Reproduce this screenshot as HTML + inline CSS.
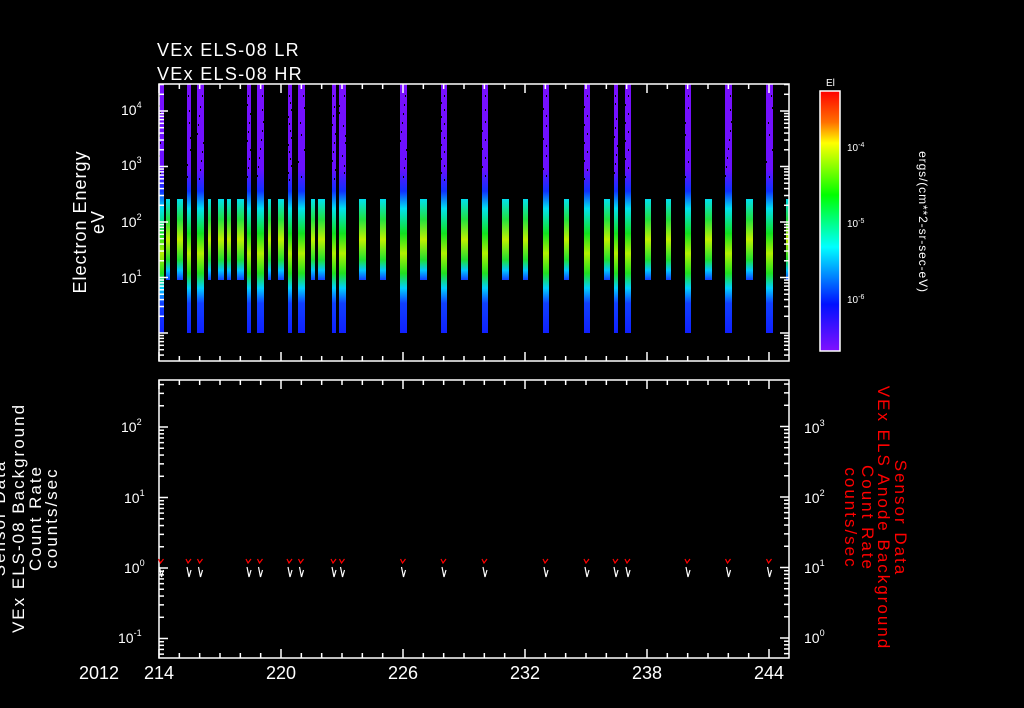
<!DOCTYPE html>
<html><head><meta charset="utf-8"><style>
html,body{margin:0;padding:0;background:#000;width:1024px;height:708px;overflow:hidden}
svg{display:block}
text{font-family:"Liberation Sans",sans-serif;fill:#fff}
</style></head><body>
<svg id="s" width="1024" height="708" viewBox="0 0 1024 708" xmlns="http://www.w3.org/2000/svg">
<defs>
<linearGradient id="gt" x1="0" y1="0" x2="0" y2="1">
<stop offset="0" stop-color="#7a10ff"/><stop offset="0.34" stop-color="#6a10ff"/>
<stop offset="0.43" stop-color="#1030ff"/><stop offset="0.5" stop-color="#00e0f0"/>
<stop offset="0.6" stop-color="#10e020"/><stop offset="0.68" stop-color="#b0f000"/>
<stop offset="0.76" stop-color="#20e020"/><stop offset="0.82" stop-color="#00d0ff"/>
<stop offset="0.88" stop-color="#1040ff"/><stop offset="1" stop-color="#1020ff"/>
</linearGradient>
<linearGradient id="gn" x1="0" y1="0" x2="0" y2="1">
<stop offset="0" stop-color="#00e0f0"/><stop offset="0.25" stop-color="#20e040"/>
<stop offset="0.5" stop-color="#c0f000"/><stop offset="0.75" stop-color="#20e030"/>
<stop offset="0.88" stop-color="#00c8ff"/><stop offset="1" stop-color="#1040ff"/>
</linearGradient>
<linearGradient id="cb" x1="0" y1="0" x2="0" y2="1">
<stop offset="0" stop-color="#ff0000"/><stop offset="0.12" stop-color="#ff7000"/>
<stop offset="0.2" stop-color="#ffff00"/><stop offset="0.4" stop-color="#00ff00"/>
<stop offset="0.6" stop-color="#00ffff"/><stop offset="0.82" stop-color="#0010ff"/>
<stop offset="1" stop-color="#8010ff"/>
</linearGradient>
</defs>
<g id="bars"></g>
<g id="ax" stroke="#fff" stroke-width="1.5" fill="none"></g>
<g id="marks" fill="none" stroke-width="1.2"></g>
<rect x="820" y="91" width="20" height="260" fill="url(#cb)" stroke="#fff" stroke-width="1.5"/>
<text x="157" y="56" font-size="18" letter-spacing="1.3">VEx ELS-08 LR</text>
<text x="157" y="80" font-size="18" letter-spacing="1.3">VEx ELS-08 HR</text>
<text x="826" y="86" font-size="10">El</text>
<g font-size="10"><text x="847" y="151">10<tspan dy="-4" font-size="7">-4</tspan></text>
<text x="847" y="227">10<tspan dy="-4" font-size="7">-5</tspan></text>
<text x="847" y="303">10<tspan dy="-4" font-size="7">-6</tspan></text></g>
<text transform="translate(919,222) rotate(90)" text-anchor="middle" font-size="12" letter-spacing="0.9">ergs/(cm**2-sr-sec-eV)</text>
<g font-size="14">
<text x="121" y="227">10<tspan dy="-7" font-size="9">2</tspan></text>
<text x="121" y="170">10<tspan dy="-7" font-size="9">3</tspan></text>
<text x="121" y="115">10<tspan dy="-7" font-size="9">4</tspan></text>
<text x="121" y="283">10<tspan dy="-7" font-size="9">1</tspan></text>
<text x="121" y="432">10<tspan dy="-7" font-size="9">2</tspan></text>
<text x="124" y="503">10<tspan dy="-7" font-size="9">1</tspan></text>
<text x="124" y="573">10<tspan dy="-7" font-size="9">0</tspan></text>
<text x="118" y="643">10<tspan dy="-7" font-size="9">-1</tspan></text>
<text x="804" y="433">10<tspan dy="-7" font-size="9">3</tspan></text>
<text x="804" y="503">10<tspan dy="-7" font-size="9">2</tspan></text>
<text x="804" y="573">10<tspan dy="-7" font-size="9">1</tspan></text>
<text x="804" y="643">10<tspan dy="-7" font-size="9">0</tspan></text>
</g>
<g font-size="18" text-anchor="middle" letter-spacing="1">
<text transform="translate(86,222) rotate(-90)">Electron Energy</text>
<text transform="translate(104,222) rotate(-90)">eV</text>
</g>
<g font-size="17" text-anchor="middle" letter-spacing="2">
<text transform="translate(5,518) rotate(-90)">Sensor Data</text>
<text transform="translate(24,518) rotate(-90)">VEx ELS-08 Background</text>
<text transform="translate(41,518) rotate(-90)">Count Rate</text>
<text transform="translate(57,518) rotate(-90)">counts/sec</text>
</g>
<g font-size="17" text-anchor="middle" letter-spacing="2" style="fill:#f00">
<text transform="translate(895,518) rotate(90)" style="fill:#f00">Sensor Data</text>
<text transform="translate(878,518) rotate(90)" style="fill:#f00">VEx ELS Anode Background</text>
<text transform="translate(862,518) rotate(90)" style="fill:#f00">Count Rate</text>
<text transform="translate(845,518) rotate(90)" style="fill:#f00">counts/sec</text>
</g>
<g font-size="18" text-anchor="middle">
<text x="99" y="679">2012</text>
<text x="159" y="679">214</text><text x="281" y="679">220</text>
<text x="403" y="679">226</text><text x="525" y="679">232</text>
<text x="647" y="679">238</text><text x="769" y="679">244</text>
</g>
</svg>
<script>
var NS="http://www.w3.org/2000/svg";
function el(p,t,a){var e=document.createElementNS(NS,t);for(var k in a)e.setAttribute(k,a[k]);p.appendChild(e);return e;}
var bars=document.getElementById('bars'),ax=document.getElementById('ax'),mk=document.getElementById('marks');
var tall=[[159,5],[187,4],[197,7],[247,4],[257,7],[288,4],[298,7],[332,4],[339,7],[400,7],[441,6],[482,6],[543,6],[584,6],[614,4],[625,6],[685,6],[725,7],[766,7]];
var nar=[[166,4],[177,6],[208,3],[218,6],[227,4],[237,7],[268,3],[278,6],[311,4],[318,7],[359,7],[380,6],[420,7],[461,7],[502,7],[523,5],[564,5],[604,6],[645,6],[666,5],[705,7],[746,7],[786,3]];
tall.forEach(function(b){el(bars,'rect',{x:b[0],y:84,width:b[1],height:249,fill:'url(#gt)'});
 for(var y=95;y<180;y+=7+((b[0]*y)%9)){el(bars,'rect',{x:b[0]+((y*3)%b[1]),y:y,width:1,height:2,fill:'#000'});}});
nar.forEach(function(b){el(bars,'rect',{x:b[0],y:199,width:b[1],height:81,fill:'url(#gn)'});});
el(ax,'rect',{x:159,y:84,width:630,height:277});
el(ax,'rect',{x:159,y:380,width:630,height:278});
var dx=(769-159)/30;
for(var d=0;d<=30;d++){var x=159+d*dx,L=(d%6==0)?9:5;
 [[84,1],[361,-1],[380,1],[658,-1]].forEach(function(p){el(ax,'line',{x1:x,y1:p[0],x2:x,y2:p[0]+p[1]*L});});}
function logt(y0,dec,lo,hi,xl,dir){for(var e=lo;e<=hi;e++)for(var m=1;m<10;m++){var y=y0-(e+Math.log10(m))*dec;
 if(y<84&&y0<370)continue;if(y>361&&y0<370)continue;if(y0>370&&(y<380||y>658))continue;
 el(ax,'line',{x1:xl,y1:y,x2:xl+dir*(m==1?9:5),y2:y});}}
logt(333,55.5,-1,4,159,1);logt(333,55.5,-1,4,789,-1);
logt(568,70.5,-2,2,159,1);logt(638,70.5,-1,3,789,-1);
tall.forEach(function(b,i){var x=b[0]+b[1]/2;
 el(mk,'polyline',{points:(x-3)+',559 '+(x-1)+',563 '+(x+2)+',559',stroke:'#f00'});
 el(mk,'polyline',{points:(x-2)+',567 '+(x)+',577 '+(x+2)+',570',stroke:'#fff'});});
</script>
</body></html>
